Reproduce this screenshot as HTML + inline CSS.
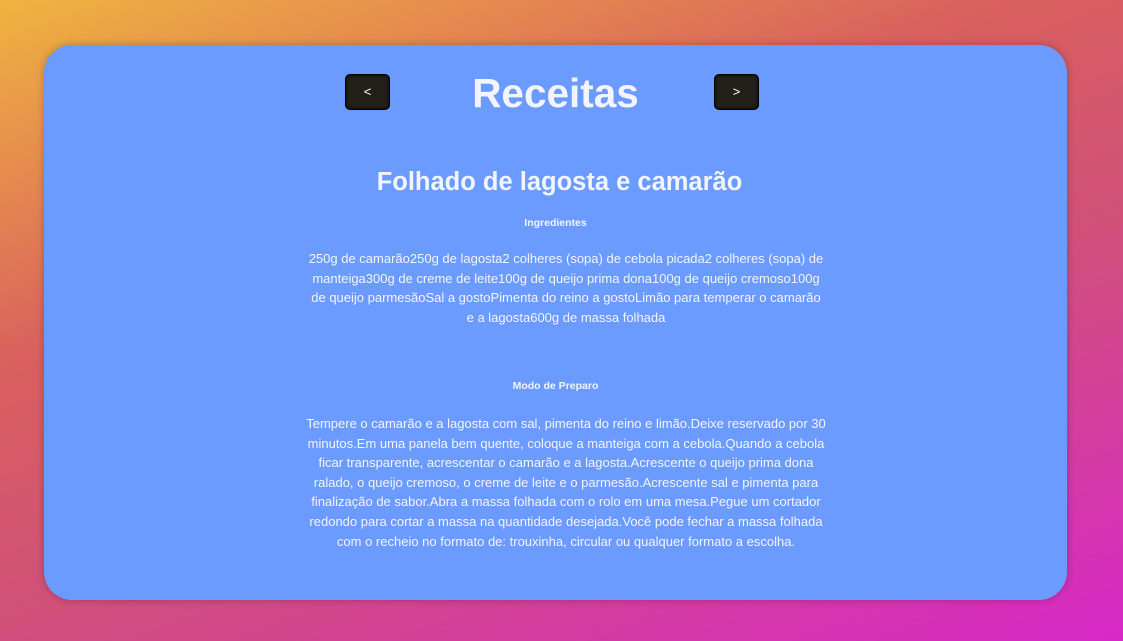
<!DOCTYPE html>
<html><head><style>
html,body{margin:0;width:1123px;height:641px;overflow:hidden}
body{background:linear-gradient(160deg,#f0b440 0%,#d9605e 35%,#d0507a 60%,#d828c8 100%);font-family:"Liberation Sans",Arial,sans-serif;color:#f2f4ff;position:relative}
.card{position:absolute;left:44px;top:45px;width:1023px;height:555px;background:#6b9bff;border-radius:28px;box-shadow:0 0 8px rgba(0,0,0,.25)}
.btn{position:absolute;top:29px;width:43px;height:34px;background:#222019;border:1px solid #000;border-radius:5px;color:#fff;font-size:13px;text-align:center;line-height:34px;box-shadow:inset 0 0 3px #000}
h1{position:absolute;left:0;right:0;top:24px;margin:0;text-align:center;font-size:40.5px;line-height:48px;font-weight:bold}
h2{position:absolute;left:8px;right:0;top:123px;margin:0;text-align:center;font-size:25.5px;font-weight:bold}
.sm{position:absolute;left:0;right:0;text-align:center;font-size:10.5px;font-weight:bold}
p{position:absolute;left:222px;width:600px;margin:0;text-align:center;font-size:13px;line-height:19.6px}
</style></head><body>
<div class="card">
<div class="btn" style="left:301px">&lt;</div>
<h1>Receitas</h1>
<div class="btn" style="left:670px">&gt;</div>
<h2>Folhado de lagosta e camarão</h2>
<div class="sm" style="top:172px">Ingredientes</div>
<p style="top:204px">250g de camarão250g de lagosta2 colheres (sopa) de cebola picada2 colheres (sopa) de<br>manteiga300g de creme de leite100g de queijo prima dona100g de queijo cremoso100g<br>de queijo parmesãoSal a gostoPimenta do reino a gostoLimão para temperar o camarão<br>e a lagosta600g de massa folhada</p>
<div class="sm" style="top:335px">Modo de Preparo</div>
<p style="top:369px">Tempere o camarão e a lagosta com sal, pimenta do reino e limão.Deixe reservado por 30<br>minutos.Em uma panela bem quente, coloque a manteiga com a cebola.Quando a cebola<br>ficar transparente, acrescentar o camarão e a lagosta.Acrescente o queijo prima dona<br>ralado, o queijo cremoso, o creme de leite e o parmesão.Acrescente sal e pimenta para<br>finalização de sabor.Abra a massa folhada com o rolo em uma mesa.Pegue um cortador<br>redondo para cortar a massa na quantidade desejada.Você pode fechar a massa folhada<br>com o recheio no formato de: trouxinha, circular ou qualquer formato a escolha.</p>
</div>
</body></html>
